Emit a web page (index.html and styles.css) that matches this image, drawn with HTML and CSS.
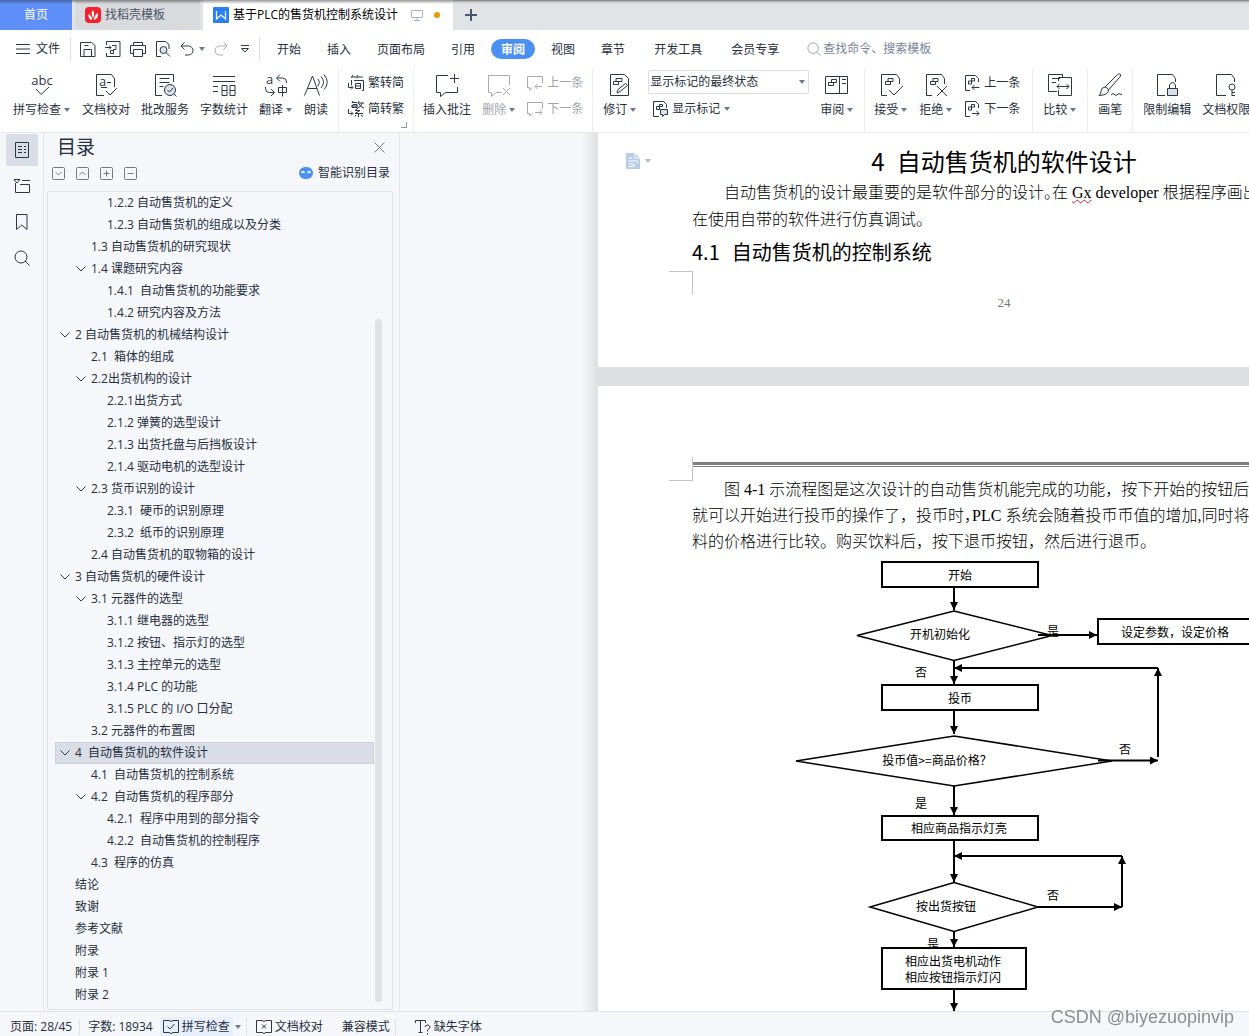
FILE: index.html
```html
<!DOCTYPE html>
<html lang="zh-CN">
<head>
<meta charset="utf-8">
<meta name="viewport" content="width=device-width, initial-scale=1">
<title>基于PLC的售货机控制系统设计</title>
<link rel="stylesheet" href="styles.css">
</head>
<body>
<svg class="defs" width="0" height="0" aria-hidden="true">
  <symbol id="caret" viewBox="0 0 6 4"><path d="M0 0h6L3 4z" fill="#6c7893"/></symbol>
  <symbol id="chev" viewBox="0 0 10 6"><path d="M.5.5 5 5 9.500.5"/></symbol>
  <symbol id="doc" viewBox="0 0 24 24"><path d="M8 22.500H2.500v-21h15l3 4V11M9 5.500h5v3H9zM6.500 8.500h5v3h-5z"/></symbol>
  <symbol id="docs" viewBox="0 0 16 16"><path d="M6 15.500H1.500v-15h10l3 3V7M4.500 9V6h3v3zM7.500 3.500h3V6h-3z"/></symbol>
  <symbol id="book" viewBox="0 0 16 16"><path d="M.5 1.500h5.500l2 1 2-1h5.500v12H10l-2 1-2-1H.5z"/></symbol>
  <symbol id="lens" viewBox="0 0 16 16"><circle cx="7" cy="7" r="6"/><path d="m11 11 4.500 4.500"/></symbol>
</svg>

<header class="tabs">
  <button class="tab home">首页</button>
  <button class="tab docer">
    <svg width="16" height="16" viewBox="0 0 16 16"><rect width="16" height="16" rx="4" fill="#f5222d"/><path d="M7.500 3c2 2 2 5 1 8-2-2-2.500-5-1-8zM3.500 7c2 1 3.500 3 4 6-3 0-4.500-3-4-6zM13 6c0 4-1 6-4 7 0-3 1.500-6 4-7z" fill="#fff"/></svg>
    找稻壳模板
  </button>
  <button class="tab current">
    <svg width="16" height="16" viewBox="0 0 16 16"><rect width="16" height="16" rx="1" fill="#2b7ff5"/><path d="M3.500 4v8L8 8l4.500 4V4" fill="none" stroke="#fff" stroke-width="1.200"/></svg>
    <span>基于PLC的售货机控制系统设计</span>
    <svg class="screen" width="12" height="12" viewBox="0 0 12 12"><path d="M.5 1.500h11v7H.5zM6 8.500v3M3 11.500h6" fill="none" stroke="#a9b2c6"/></svg>
    <i class="unsaved"></i>
  </button>
  <button class="add" aria-label="新建"><svg width="12" height="12" viewBox="0 0 12 12"><path d="M6 0v12M0 6h12" stroke="#4a5673" stroke-width="2"/></svg></button>
</header>

<nav class="menu">
  <button class="file"><svg class="ic" width="14" height="10" viewBox="0 0 14 10"><path d="M0 .5h14M0 5h14M0 9.500h14"/></svg>文件</button>
  <div class="quick">
    <button aria-label="保存"><svg class="ic" width="16" height="16" viewBox="0 0 16 16"><path d="M.5 1.500h11l3.500 3v11H.5zM4 15.500v-7h7.500v7M4.500 4.500h4"/></svg></button>
    <button aria-label="输出为PDF"><svg class="ic" width="16" height="16" viewBox="0 0 16 16"><path d="M1.500 4V.5h13.500v15H1.500V12M0 6.500h6M4 4.500l2 2-2 2M7 4.500h4v4H8.500v4H5.500v-3h3"/></svg></button>
    <button aria-label="打印"><svg class="ic" width="16" height="16" viewBox="0 0 16 16"><path d="M3.500 4.500v-3h9v3M3 12.500H.5v-8h15v8H13M3.500 8.500h9v7h-9z"/></svg></button>
    <button aria-label="打印预览"><svg class="ic" width="16" height="16" viewBox="0 0 16 16"><path d="M6 15.500H1.500V.5h9l3.500 3V8"/><circle cx="8.500" cy="9" r="3.500" fill="#dcdfe6"/><path d="m11 11.500 4 4"/></svg></button>
    <button aria-label="撤销" class="undo"><svg class="ic" width="14" height="14" viewBox="0 0 14 14"><path d="M4.500.5 1 4l3.500 3.500M1 4h7.500a4.500 4.500 0 0 1 0 9H5"/></svg><svg width="6" height="4"><use href="#caret"/></svg></button>
    <button aria-label="恢复"><svg class="ic off" width="14" height="14" viewBox="0 0 14 14"><path d="M9.500.5 13 4 9.500 7.500M13 4H5.500a4.500 4.500 0 0 0 0 9H9"/></svg></button>
    <button aria-label="自定义"><svg class="ic" width="8" height="8" viewBox="0 0 8 8"><path d="M0 .5h8M.5 3.500h7L4 7z"/></svg></button>
  </div>
  <div class="menus">
    <button>开始</button><button>插入</button><button>页面布局</button><button>引用</button><button class="on">审阅</button><button>视图</button><button>章节</button><button class="wide">开发工具</button><button class="wide">会员专享</button>
  </div>
  <label class="find"><svg width="14" height="14"><use href="#lens"/></svg><input type="text" aria-label="查找命令" placeholder="查找命令、搜索模板"></label>
</nav>

<section class="ribbon">
  <div class="group first">
    <button class="tool"><svg class="ic" width="24" height="24" viewBox="0 0 24 24"><text x="12" y="12" text-anchor="middle" class="lt">abc</text><path d="m6 16 5 5.500 8-7.500"/></svg><span>拼写检查<svg width="6" height="4"><use href="#caret"/></svg></span></button>
    <button class="tool"><svg class="ic" width="24" height="24" viewBox="0 0 24 24"><path d="M10 22.500H2.500v-21h15l3 4V14M13 9.500h4M7 14.500h6M12 18l4 4 7-7"/><text x="5" y="13" class="lt">a</text></svg><span>文档校对</span></button>
    <button class="tool"><svg class="ic" width="24" height="24" viewBox="0 0 24 24"><path d="M9 22.500H2.500v-21h18V9M6.500 5.500h10M6.500 9.500h10M6.500 13.500h4"/><circle cx="17" cy="17" r="5.500" fill="#dcdfe6"/><path d="m14.500 17 2 2 3.500-4M21 21l2.500 2.500"/></svg><span>批改服务</span></button>
    <button class="tool"><svg class="ic" width="24" height="24" viewBox="0 0 24 24"><path d="M1 3.500h22M1 8.500h22M1 13.500h5M1 18.500h5M10 12.500h5v10h-5zM18 12.500h5v10h-5zM10 17.500h5M18 17.500h5"/></svg><span>字数统计</span></button>
    <button class="tool"><svg class="ic" width="24" height="24" viewBox="0 0 24 24"><text x="2" y="11" class="lt">a</text><path d="M16 1.500 12.500 5l3.500 3.500M13 5h5.500q4 0 4 4v1M1.500 14v1.500q0 4 4 4H10M7 16l3.500 3.500L7 23M14.500 14.500h8v5h-8zM18.500 12v11.500"/></svg><span>翻译<svg width="6" height="4"><use href="#caret"/></svg></span></button>
    <button class="tool"><svg class="ic" width="24" height="24" viewBox="0 0 24 24"><path d="M.5 22.500 8.500 3l7 19.500M3.500 15.500H13M14 6q3 3 0 7M17 3.500q5 6 0 11.500M20 1.500q6.500 8 0 15"/></svg><span>朗读</span></button>
  </div>
  <div class="group tight corner">
    <div class="stack">
      <button class="row"><svg class="ic" width="16" height="16" viewBox="0 0 16 16"><path d="M5 0 3 3M4 2h4M10 0 8 3M9 2h6M3.500 5v5M6 5.500h9.500v10H14M7.500 8.500h5v5h-5zM7.500 11h5M.5 8v4.500h4M3 10.500l2 2-2 2"/></svg>繁转简</button>
      <button class="row"><svg class="ic" width="16" height="16" viewBox="0 0 16 16"><path d="M5 0 4 2M4 1.500h5M5 3.500h4v3H4zM3 5h7M11 0l-1 3M10.500 2H16M14 2q-1 4-4 5M11 3q1 3 5 4M10 7 7 9.500h5L7 12.500h8M10.500 12v4M8 14l-1 1.500M13 14l2 1.500M.5 8v4.500h4M3 10.500l2 2-2 2"/></svg>简转繁</button>
    </div>
  </div>
  <div class="group tight">
    <button class="tool"><svg class="ic" width="24" height="24" viewBox="0 0 24 24"><path d="M13 2.500H1.500v17h4v4l5-4h12V14M19.500 1v9M15 5.500h9"/></svg><span>插入批注</span></button>
    <button class="tool"><svg class="ic off" width="24" height="24" viewBox="0 0 24 24"><path d="M22.500 12V2.500H1.500v17h3v4l5-4h5M16 15l7 7M23 15l-7 7"/></svg><span class="dim">删除<svg width="6" height="4"><use href="#caret"/></svg></span></button>
    <div class="stack">
      <button class="row dim"><svg class="ic off" width="16" height="16" viewBox="0 0 16 16"><path d="M15.500 8V1.500H.5v11h2V15l3-2.500M15 11.500H8M10.500 9 8 11.500l2.500 2.500"/></svg>上一条</button>
      <button class="row dim"><svg class="ic off" width="16" height="16" viewBox="0 0 16 16"><path d="M15.500 8V1.500H.5v11h2V15l3-2.500M8 11.500h7M12.500 9l2.500 2.500-2.500 2.500"/></svg>下一条</button>
    </div>
  </div>
  <div class="group">
    <button class="tool"><svg class="ic" width="24" height="24" viewBox="0 0 24 24"><path d="M2.500 22.500v-21h14l4 4v17zM8 5.500h6v3H8zM5.500 8.500h5v3h-5zM9 20l1-3.500 7.500-6 2 2-7.500 6z"/></svg><span>修订<svg width="6" height="4"><use href="#caret"/></svg></span></button>
    <div class="stack">
      <label class="combo"><select aria-label="显示状态"><option>显示标记的最终状态</option></select><svg width="6" height="4"><use href="#caret"/></svg></label>
      <button class="row inset"><svg class="ic" width="16" height="16" viewBox="0 0 16 16"><path d="M7 15.500H1.500v-15h10l3 3V7M4.500 8.500v-3h3v3zM7.500 3.500h3v2h-3z"/><path d="M8.500 8.500h7v5h-3l-2 2v-2h-2z" fill="#dcdfe6"/></svg>显示标记<svg width="6" height="4"><use href="#caret"/></svg></button>
    </div>
    <button class="tool"><svg class="ic" width="24" height="24" viewBox="0 0 24 24"><path d="M.5 3.500h22v17H.5zM14.500 3.500v17M6.500 6.500h5v3h-5zM3.500 9.500h5v3h-5zM17 6.500h4M17 10.500h4"/></svg><span>审阅<svg width="6" height="4"><use href="#caret"/></svg></span></button>
  </div>
  <div class="group nav">
    <button class="tool"><svg class="ic" width="24" height="24" viewBox="0 0 24 24"><use href="#doc"/><path d="m10 17 5 5 9-9"/></svg><span>接受<svg width="6" height="4"><use href="#caret"/></svg></span></button>
    <button class="tool"><svg class="ic" width="24" height="24" viewBox="0 0 24 24"><use href="#doc"/><path d="m13 13 10 10M23 13 13 23"/></svg><span>拒绝<svg width="6" height="4"><use href="#caret"/></svg></span></button>
    <div class="stack">
      <button class="row"><svg class="ic" width="16" height="16" viewBox="0 0 16 16"><use href="#docs"/><path d="M15.500 12.500H8M10.500 10 8 12.500l2.500 2.500"/></svg>上一条</button>
      <button class="row"><svg class="ic" width="16" height="16" viewBox="0 0 16 16"><use href="#docs"/><path d="M8 12.500h7M12.500 10l2.500 2.500-2.500 2.500"/></svg>下一条</button>
    </div>
  </div>
  <div class="group">
    <button class="tool"><svg class="ic" width="24" height="24" viewBox="0 0 24 24"><path d="M9 18.500H.5v-17h14v3M4 5.500h8M4 9.500h4M10.500 8V4.500h13v18h-13V17M9 13.500h12M11.500 11 9 13.500l2.500 2.500M18.500 11l2.500 2.500-2.500 2.500"/></svg><span>比较<svg width="6" height="4"><use href="#caret"/></svg></span></button>
  </div>
  <div class="group">
    <button class="tool"><svg class="ic" width="24" height="24" viewBox="0 0 24 24"><path d="M7 14 19.500 1.500q2-1.500 3 0 .5 1.500-1 3L10.500 17M7 14q2 0 3.500 3 0 5-9.500 5.500 2-1 2-4 0-4 4-4.500M13 22q2-3 4 0 2 1 3-1 2-1 4 1"/></svg><span>画笔</span></button>
  </div>
  <div class="group last">
    <button class="tool"><svg class="ic" width="24" height="24" viewBox="0 0 24 24"><path d="M10 22.500H2.500v-21h15l3 4V9"/><path d="M12.500 15.500h10v7h-10z" fill="#dcdfe6"/><path d="M14.500 15.500V12q3-5 6 0v3.500"/></svg><span>限制编辑</span></button>
    <button class="tool"><svg class="ic" width="24" height="24" viewBox="0 0 24 24"><path d="M12 22.500H2.500v-21h15l3 4V9"/><circle cx="18" cy="14" r="3"/><path d="M18 17v6M18 19.500h3M18 22.500h3"/></svg><span>文档权限</span></button>
  </div>
</section>

<main class="main">
  <nav class="rail">
    <button class="on" aria-label="目录"><svg class="ic" width="16" height="16" viewBox="0 0 16 16"><path d="M1.500.5h13v15h-13zM4 4.500h4M10 4.500h2M4 7.500h4M10 7.500h2M4 10.500h4M10 10.500h2"/></svg></button>
    <button aria-label="章节"><svg class="ic" width="16" height="16" viewBox="0 0 16 16"><path d="M0 1.500h6L3 5zM8 2.500h8M1.500 5v9.500h14v-8H6"/></svg></button>
    <button aria-label="书签"><svg class="ic" width="16" height="16" viewBox="0 0 16 16"><path d="M2.500.5h10.500v15L7.800 11l-5.300 4.500z"/></svg></button>
    <button aria-label="查找"><svg class="ic" width="16" height="16"><use href="#lens"/></svg></button>
  </nav>

  <aside class="panel">
    <div class="head"><h2>目录</h2><button aria-label="关闭"><svg class="thin" width="11" height="11" viewBox="0 0 11 11"><path d="m.5.5 10 10M10.500.5l-10 10"/></svg></button></div>
    <div class="acts">
      <button aria-label="展开"><svg class="thin" width="13" height="13" viewBox="0 0 13 13"><rect x=".5" y=".5" width="12" height="12" rx="1"/><path d="m3.500 5 3 3 3-3"/></svg></button>
      <button aria-label="收起"><svg class="thin" width="13" height="13" viewBox="0 0 13 13"><rect x=".5" y=".5" width="12" height="12" rx="1"/><path d="m3.500 8 3-3 3 3"/></svg></button>
      <button aria-label="增加"><svg class="thin" width="13" height="13" viewBox="0 0 13 13"><rect x=".5" y=".5" width="12" height="12" rx="1"/><path d="M3.500 6.500h6M6.500 3.500v6"/></svg></button>
      <button aria-label="减少"><svg class="thin" width="13" height="13" viewBox="0 0 13 13"><rect x=".5" y=".5" width="12" height="12" rx="1"/><path d="M3.500 6.500h6"/></svg></button>
      <button class="smart"><svg width="14" height="12" viewBox="0 0 14 12"><rect width="14" height="12" rx="6" fill="#4a90f7"/><path d="M2.500 6q1.500-3 3 0M8.500 6q1.500-3 3 0" fill="none" stroke="#fff" stroke-width="1.500"/></svg>智能识别目录</button>
    </div>
    <div class="outline">
      <ul>
        <li class="l3"><a href="#">1.2.2 自动售货机的定义</a></li>
        <li class="l3"><a href="#">1.2.3 自动售货机的组成以及分类</a></li>
        <li class="l2"><a href="#">1.3 自动售货机的研究现状</a></li>
        <li class="l2 open"><svg class="ic" width="10" height="6"><use href="#chev"/></svg><a href="#">1.4 课题研究内容</a></li>
        <li class="l3"><a href="#">1.4.1&nbsp; 自动售货机的功能要求</a></li>
        <li class="l3"><a href="#">1.4.2 研究内容及方法</a></li>
        <li class="l1 open"><svg class="ic" width="10" height="6"><use href="#chev"/></svg><a href="#">2 自动售货机的机械结构设计</a></li>
        <li class="l2"><a href="#">2.1&nbsp; 箱体的组成</a></li>
        <li class="l2 open"><svg class="ic" width="10" height="6"><use href="#chev"/></svg><a href="#">2.2出货机构的设计</a></li>
        <li class="l3"><a href="#">2.2.1出货方式</a></li>
        <li class="l3"><a href="#">2.1.2 弹簧的选型设计</a></li>
        <li class="l3"><a href="#">2.1.3 出货托盘与后挡板设计</a></li>
        <li class="l3"><a href="#">2.1.4 驱动电机的选型设计</a></li>
        <li class="l2 open"><svg class="ic" width="10" height="6"><use href="#chev"/></svg><a href="#">2.3 货币识别的设计</a></li>
        <li class="l3"><a href="#">2.3.1&nbsp; 硬币的识别原理</a></li>
        <li class="l3"><a href="#">2.3.2&nbsp; 纸币的识别原理</a></li>
        <li class="l2"><a href="#">2.4 自动售货机的取物箱的设计</a></li>
        <li class="l1 open"><svg class="ic" width="10" height="6"><use href="#chev"/></svg><a href="#">3 自动售货机的硬件设计</a></li>
        <li class="l2 open"><svg class="ic" width="10" height="6"><use href="#chev"/></svg><a href="#">3.1 元器件的选型</a></li>
        <li class="l3"><a href="#">3.1.1 继电器的选型</a></li>
        <li class="l3"><a href="#">3.1.2 按钮、指示灯的选型</a></li>
        <li class="l3"><a href="#">3.1.3 主控单元的选型</a></li>
        <li class="l3"><a href="#">3.1.4 PLC 的功能</a></li>
        <li class="l3"><a href="#">3.1.5 PLC 的 I/O 口分配</a></li>
        <li class="l2"><a href="#">3.2 元器件的布置图</a></li>
        <li class="l1 open sel"><svg class="ic" width="10" height="6"><use href="#chev"/></svg><a href="#">4&nbsp; 自动售货机的软件设计</a></li>
        <li class="l2"><a href="#">4.1&nbsp; 自动售货机的控制系统</a></li>
        <li class="l2 open"><svg class="ic" width="10" height="6"><use href="#chev"/></svg><a href="#">4.2&nbsp; 自动售货机的程序部分</a></li>
        <li class="l3"><a href="#">4.2.1&nbsp; 程序中用到的部分指令</a></li>
        <li class="l3"><a href="#">4.2.2&nbsp; 自动售货机的控制程序</a></li>
        <li class="l2"><a href="#">4.3&nbsp; 程序的仿真</a></li>
        <li class="l1"><a href="#">结论</a></li>
        <li class="l1"><a href="#">致谢</a></li>
        <li class="l1"><a href="#">参考文献</a></li>
        <li class="l1"><a href="#">附录</a></li>
        <li class="l1"><a href="#">附录 1</a></li>
        <li class="l1"><a href="#">附录 2</a></li>
      </ul>
      <i class="thumb"></i>
    </div>
  </aside>

  <div class="work">
    <article class="page one">
      <button class="badge" aria-label="段落选项"><svg width="26" height="16" viewBox="0 0 26 16"><path d="M0 0h9l5 5v11H0z" fill="#b8cce8"/><path d="M9 0v5h5M2.500 5h4M2.500 8h9M2.500 11h5M8 11v2.500H2.500M11.500 8v3" fill="none" stroke="#fff"/><path d="M19 6h6l-3 4z" fill="#b5b5b5"/></svg></button>
      <h1><span class="num">4</span>自动售货机的软件设计</h1>
      <p class="loose">自动售货机的设计最重要的是软件部分的设计<span class="half">。</span>在 <span class="typo">Gx</span> developer 根据程序画出<br>在使用自带的软件进行仿真调试。</p>
      <h2><span class="num">4.1</span>自动售货机的控制系统</h2>
      <i class="mark bottom"></i>
      <div class="folio">24</div>
    </article>
    <article class="page two">
      <div class="top"><i class="mark"></i><hr></div>
      <p>图 4-1 示流程图是这次设计的自动售货机能完成的功能，按下开始的按钮后<br>就可以开始进行投币的操作了，投币时<span class="half">，</span>PLC 系统会随着投币币值的增加,同时将<br>料的价格进行比较。购买饮料后，按下退币按钮，然后进行退币。</p>
      <svg class="flow" width="624" height="456" viewBox="692 555 624 456">
        <defs><marker id="tip" viewBox="0 0 8 8" refX="8" refY="4" markerWidth="8" markerHeight="8" markerUnits="userSpaceOnUse" orient="auto"><path d="M0 0l8 4-8 4z" fill="#000" stroke="none"/></marker></defs>
        <g class="box"><rect x="882" y="562" width="156" height="25"/><rect x="1098" y="619" width="156" height="25"/><rect x="882" y="685" width="156" height="25"/><rect x="882" y="816" width="156" height="24"/></g>
        <g class="edge"><path d="M954 611l98 24.500-98 25-97-25zM954 736l158 25-158 25-158-25zM954 882.500l84 24.500-84 24.500-84-24.500z"/></g>
        <g class="link">
          <path d="M954 588v22"/><path d="M1038 635h59"/><path d="M954 661v23"/><path d="M1158 757v-89"/><path d="M1158 668H954"/><path d="M954 711v23"/><path d="M1098 760.500h60"/><path d="M954 786v29"/><path d="M954 841v41"/><path d="M1038 907h84"/><path d="M1122 907v-51"/><path d="M1122 856H954"/><path d="M954 932v15"/><path d="M954 990v21"/>
        </g>
        <g class="word">
          <text x="960" y="580">开始</text><text x="940" y="639">开机初始化</text><text x="1053" y="636">是</text><text x="1175" y="637">设定参数，设定价格</text><text x="921" y="677">否</text><text x="960" y="703">投币</text><text x="937" y="765">投币值&gt;=商品价格？</text><text x="1125" y="754">否</text><text x="921" y="808">是</text><text x="959" y="833">相应商品指示灯亮</text><text x="946" y="911">按出货按钮</text><text x="1053" y="900">否</text><text x="933" y="949">是</text>
        </g>
        <g class="box"><rect x="882" y="948" width="144" height="41"/></g>
        <g class="word"><text x="953" y="966">相应出货电机动作</text><text x="953" y="982">相应按钮指示灯闪</text></g>
      </svg>
    </article>
  </div>
</main>

<footer class="status">
  <span class="cell pages">页面: 28/45</span>
  <span class="cell words">字数: 18934</span>
  <button class="check"><span><svg class="ic" width="16" height="16"><use href="#book"/><path d="m4.500 7.500 2.500 2.500 4.500-5"/></svg>拼写检查</span><svg width="6" height="4"><use href="#caret"/></svg></button>
  <button class="proof"><svg class="ic" width="16" height="16"><use href="#book"/><path d="m6 5.500 4 4M10 5.500l-4 4"/></svg>文档校对</button>
  <span class="cell mode">兼容模式</span>
  <button class="glyph"><svg class="ic" width="16" height="16" viewBox="0 0 16 16"><path d="M.5 4V1.500h10V4M5.500 1.500v12M3.500 13.500h4M10 8q.5-2 2.500-2T15 8q0 1.500-2.500 3v1.500M12.500 14v1.500"/></svg>缺失字体</button>
</footer>
<div class="watermark">CSDN @biyezuopinvip</div>
</body>
</html>
```
FILE: styles.css
```css
* { box-sizing: border-box; }
body {
  margin: 0;
  min-height: 100vh;
  display: flex;
  flex-direction: column;
  overflow-x: hidden;
  background: #f5f7fa;
  color: #262f40;
  font: 12px/16px "Open Sans", "Noto Sans CJK SC", sans-serif;
}
button, input, select { font: inherit; color: inherit; border: 0; padding: 0; margin: 0; background: none; }
button { display: flex; align-items: center; white-space: nowrap; }
svg { flex: none; display: block; }
a { color: inherit; text-decoration: none; }
.defs { position: absolute; }
.ic, .find svg { fill: none; stroke: #2c3648; }
.ic { overflow: visible; }
.ic.off { stroke: #a8abb2; }
.thin { fill: none; stroke: #737a87; }
.lt { font: 13px "Open Sans", sans-serif; fill: #2c3648; stroke: none; }

.tabs {
  display: flex;
  gap: 3px;
  height: 30px;
  background: linear-gradient(#77797d, #c8cacd 2px, #e1e3e7 4px);
}
.tab.home { width: 72px; justify-content: center; color: #fff; background: linear-gradient(#44639f, #5f8ff8 4px); }
.tab { gap: 4px; }
.docer { width: 125px; padding-left: 10px; color: #4a5568; background: linear-gradient(#808285, #d8dadd 4px); }
.current { width: 250px; padding-left: 10px; color: #000; background: linear-gradient(#999, #fff 4px); }
.screen { margin-left: 9px; }
.unsaved { width: 6px; height: 6px; margin-left: 7px; border-radius: 50%; background: #e99a08; }
.add { margin-left: 9px; }

.menu { display: flex; align-items: center; height: 38px; background: #fff; }
.file { gap: 6px; height: 24px; padding: 0 10px 0 16px; border-right: 1px solid #dcdfe6; }
.quick { display: flex; align-items: center; gap: 9px; height: 24px; padding: 0 10px 0 9px; border-right: 1px solid #dcdfe6; }
.quick button:last-child { margin: 0 0 0 4px; }
.undo { gap: 5px; }
.menus { display: flex; gap: 6px; padding-left: 7px; }
.menus button { height: 20px; padding: 2px 10px 0; }
.menus .wide { margin-left: 3px; }
.menus .on { color: #fff; font-weight: 700; background: #4a90f2; border-radius: 10px; }
.find { display: flex; align-items: center; flex: 1; gap: 2px; margin-left: 18px; }
.find svg { stroke: #8c98b0; }
.find input { flex: 1; min-width: 0; }
.find input::placeholder { color: #77839c; opacity: 1; }

.ribbon { display: flex; height: 64px; background: #fff; overflow: hidden; white-space: nowrap; }
.group { display: flex; align-items: flex-start; flex: none; gap: 11px; padding: 0 10px; border-right: 1px solid #eceef1; }
.group.first { padding-left: 13px; }
.group.tight { padding: 0 9px; }
.group.nav { padding: 0 12px 0 9px; }
.group.last { border: 0; }
.corner { position: relative; }
.corner::after { content: ""; position: absolute; right: 6px; bottom: 4px; width: 5px; height: 5px; border: solid #8c98b0; border-width: 0 1px 1px 0; }
.tool { flex-direction: column; gap: 5px; padding-top: 5px; }
.tool span { display: flex; align-items: center; }
.tool span svg { margin: 0 1px 0 3px; }
.stack { display: flex; flex-direction: column; gap: 2px; padding-top: 2px; }
.row { gap: 4px; height: 24px; padding-top: 2px; }
.row.inset { margin-left: 4px; }
.dim { color: #a0a3aa; }
.combo { display: flex; align-items: center; width: 161px; height: 24px; padding: 0 3px 0 1px; border: 1px solid #d9dce2; border-radius: 2px; }
.combo select { flex: 1; min-width: 0; appearance: none; }

.main { display: flex; flex: 1; border-top: 1px solid #e6e8eb; }
.rail { display: flex; flex-direction: column; align-items: center; gap: 4px; width: 44px; padding-top: 1px; border-right: 1px solid #e2e5eb; }
.rail button { width: 32px; height: 32px; justify-content: center; border-radius: 2px; }
.rail .on { background: #d9dee6; }
.panel { display: flex; flex-direction: column; flex: none; width: 356px; padding: 0 6px 1px 3px; border-right: 1px solid #e2e5eb; }
.head { display: flex; align-items: center; justify-content: space-between; height: 28px; padding: 0 8px 0 10px; }
.head h2 { margin: 0; font-size: 19px; line-height: 28px; font-weight: 400; }
.acts { display: flex; align-items: center; gap: 11px; height: 24px; margin-bottom: 6px; padding: 0 3px 0 5px; }
.smart { gap: 5px; margin-left: auto; }
.outline { position: relative; flex: 1; padding: 0 18px 0 7px; border: 1px solid #dfe3ea; border-radius: 2px; }
.outline ul { margin: 0; padding: 0; list-style: none; }
.outline li { display: flex; align-items: center; gap: 5px; height: 22px; white-space: pre; }
.l1 { padding-left: 20px; }
.l2 { padding-left: 36px; }
.l3 { padding-left: 52px; }
.l1.open { padding-left: 5px; }
.l2.open { padding-left: 21px; }
.sel { background: #d9dee6; box-shadow: inset 0 0 0 1px #cbd2dd; }
.thumb { position: absolute; right: 10px; top: 127px; bottom: 7px; width: 7px; border-radius: 4px; background: #dfe1e4; }

.work { flex: 1; min-width: 0; overflow: hidden; padding-left: 198px; background: linear-gradient(to right, #f5f7fa 182px, #dedfe2 198px); }
.page { width: 812px; padding: 0 94px; background: #fff; color: #000; white-space: nowrap; }
.page p { margin: 0; text-indent: 32px; font: 16px/26px "Liberation Serif", "Noto Sans CJK SC", serif; font-weight: 300; }
.page .loose { line-height: 27px; }
.page h1, .page h2 { margin: 0; font-family: "Noto Sans CJK SC", sans-serif; font-weight: 400; }
.page h1 { margin-bottom: 3px; font-size: 24px; line-height: 30px; text-align: center; }
.page h2 { font-size: 20px; line-height: 38px; }
.num { margin-right: 12px; }
.half { font-family: "Noto Sans CJK SC", sans-serif; font-feature-settings: "halt"; line-height: 0; }
.typo { text-decoration: underline wavy #e02020 1px; }
.one { position: relative; margin-bottom: 19px; padding-top: 13px; padding-bottom: 56px; }
.badge { position: absolute; left: 28px; top: 20px; }
.mark { display: block; width: 24px; height: 24px; margin-left: -23px; border: solid #c4c4c4; border-width: 0 1px 1px 0; }
.mark.bottom { border-width: 1px 1px 0 0; }
.folio { text-align: center; color: #777; font: 13px/16px "Liberation Serif", serif; }
.two { padding-top: 71px; }
.top { display: flex; height: 20px; }
.top hr { flex: 1; height: 5px; margin: 5px 0 0; border: solid #7f7f7f; border-width: 3px 0 1px; }
.box { fill: #fff; stroke: #000; stroke-width: 2; }
.edge { fill: none; stroke: #000; stroke-width: 1.5; }
.link path { fill: none; stroke: #000; stroke-width: 2; marker-end: url(#tip); }
.word { font: 12px "Noto Sans CJK SC", sans-serif; text-anchor: middle; }

.status { display: flex; align-items: center; height: 25px; padding: 5px 10px 0; border-top: 1px solid #dfe2e7; background: #f5f7fa; white-space: nowrap; }
.pages { padding-right: 7px; border-right: 1px solid #dfe2e7; }
.words { padding: 0 7px 0 8px; }
.check { gap: 2px; padding-right: 5px; border-right: 1px solid #dfe2e7; }
.check span { display: flex; align-items: center; gap: 3px; height: 19px; padding: 0 3px; background: #e6effb; }
.proof { gap: 3px; padding-left: 9px; }
.mode { margin-left: 19px; padding-right: 5px; border-right: 1px solid #dfe2e7; }
.glyph { gap: 3px; margin-left: 19px; }
.watermark { position: fixed; right: 15px; bottom: 8px; color: #8b8d91; font: 18px/22px "Liberation Sans", sans-serif; }
```
